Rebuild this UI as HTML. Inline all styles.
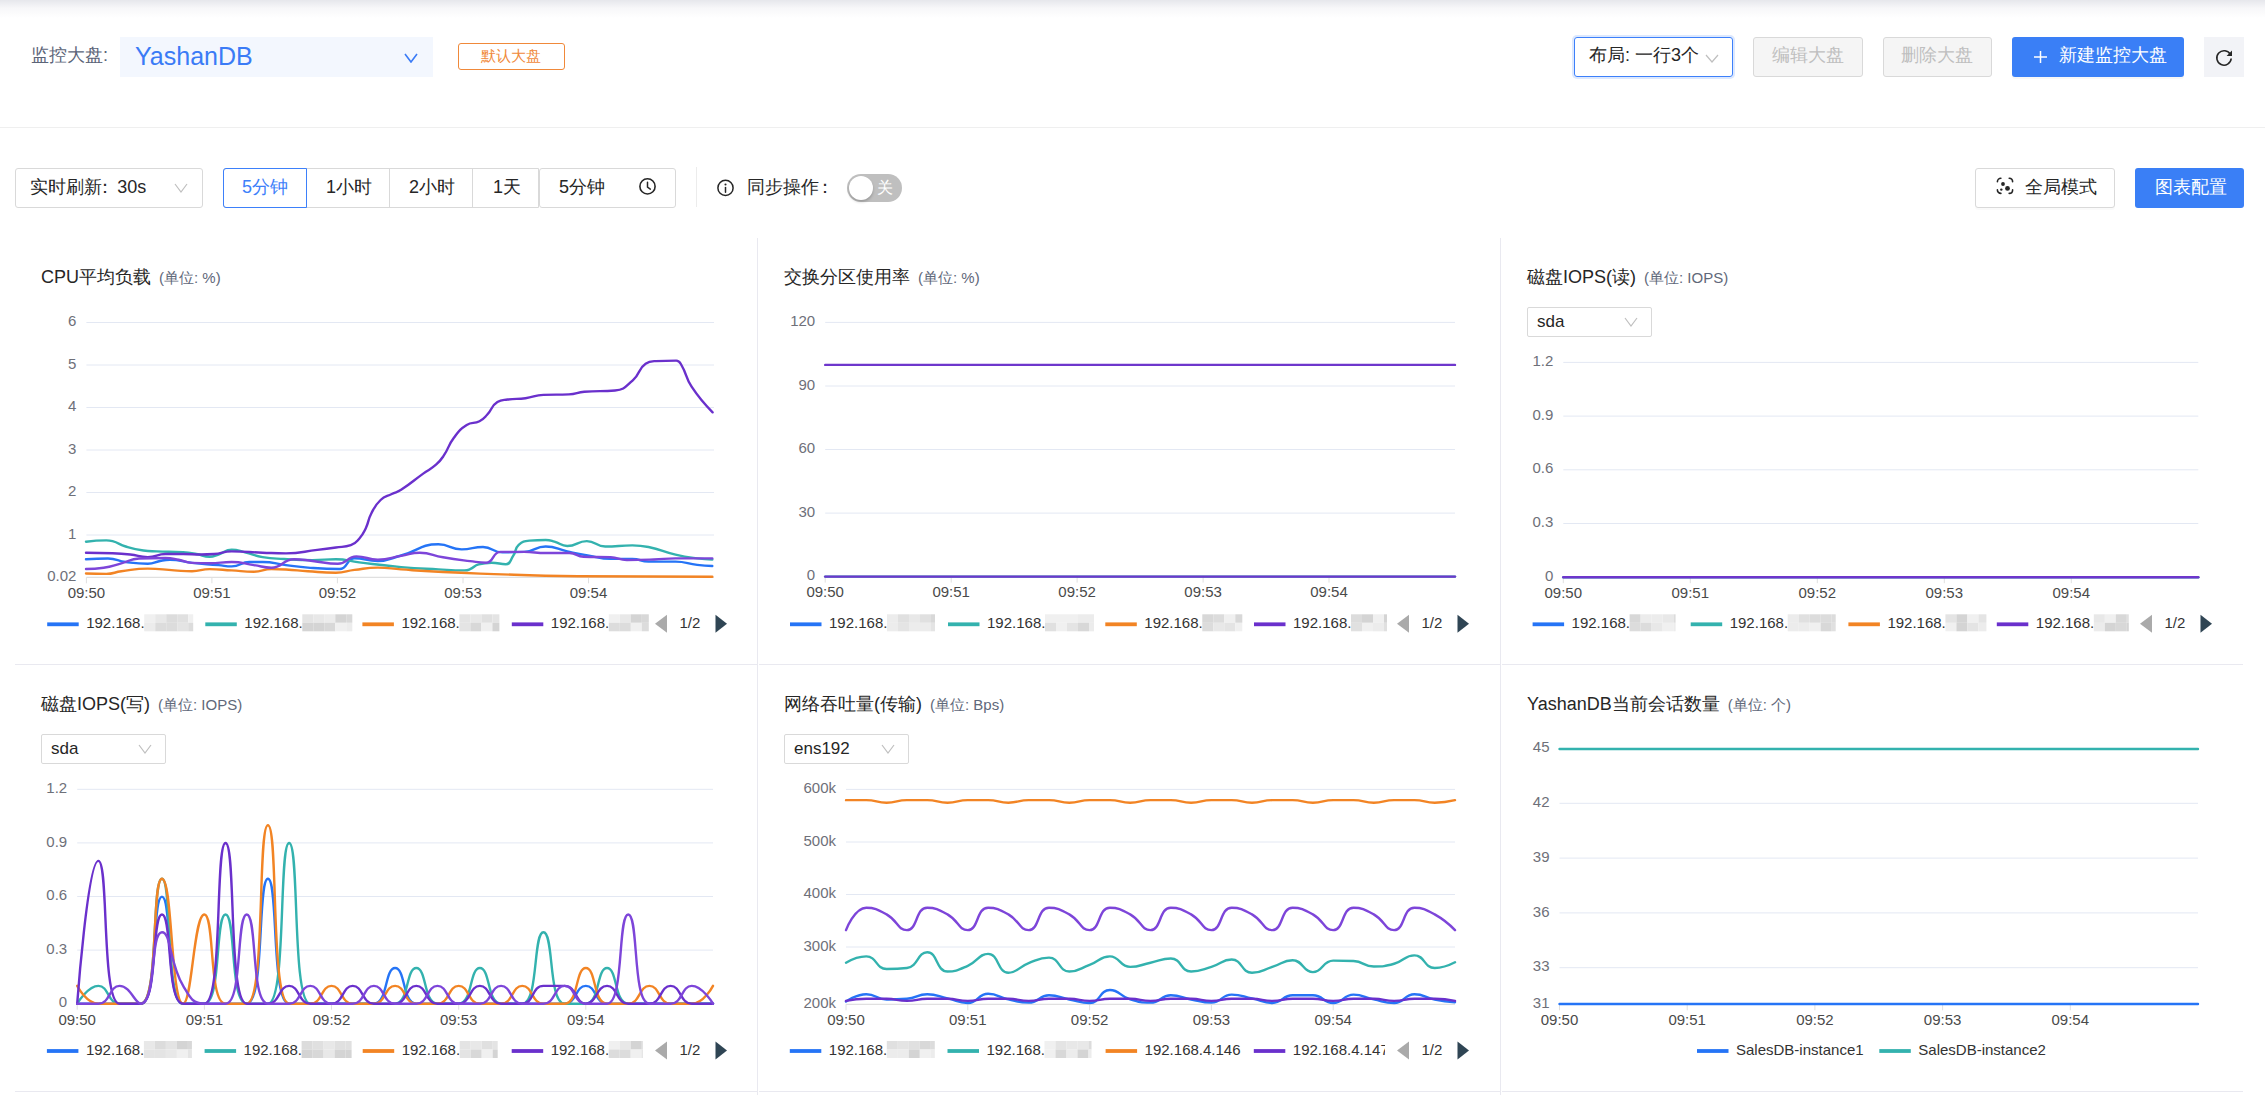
<!DOCTYPE html><html><head><meta charset="utf-8"><style>
*{margin:0;padding:0;box-sizing:border-box}
html,body{width:2265px;height:1095px;overflow:hidden;background:#fff;font-family:"Liberation Sans", sans-serif;color:#333}
.a{position:absolute}
.t{position:absolute;white-space:nowrap;line-height:1}
.btn{position:absolute;border:1px solid #d9d9d9;border-radius:3px;background:#fff}
</style></head><body>
<div class="a" style="left:0;top:0;width:2265px;height:18px;background:linear-gradient(#e6e7ec,#f7f7f9 45%,#fff)"></div>
<div class="t" style="left:31px;top:46px;font-size:18px;color:#5b6478">监控大盘:</div>
<div class="a" style="left:120px;top:37px;width:313px;height:40px;background:#f3f7fe"></div>
<div class="t" style="left:135px;top:44px;font-size:25px;color:#3a7bf6">YashanDB</div>
<svg class="a" style="left:404px;top:53px" width="14" height="10"><polyline points="1.0,1.0 7.0,9.0 13.0,1.0" fill="none" stroke="#3a7bf6" stroke-width="1.6"/></svg>
<div class="a" style="left:458px;top:43px;width:107px;height:27px;border:1px solid #f0893a;border-radius:3px"></div>
<div class="t" style="left:481px;top:48px;font-size:15px;color:#f0893a">默认大盘</div>
<div class="a" style="left:1574px;top:37px;width:159px;height:40px;border:1px solid #3d80fa;border-radius:3px;box-shadow:0 0 0 2px rgba(61,128,250,0.18)"></div>
<div class="t" style="left:1589px;top:46px;font-size:18px;color:#262626">布局: 一行3个</div>
<svg class="a" style="left:1705px;top:54px" width="14" height="9"><polyline points="1.0,1.0 7.0,8.0 13.0,1.0" fill="none" stroke="#bfbfbf" stroke-width="1.2"/></svg>
<div class="a" style="left:1753px;top:37px;width:110px;height:40px;border:1px solid #d9d9d9;border-radius:3px;background:#f5f5f5"></div>
<div class="t" style="left:1772px;top:46px;font-size:18px;color:#bfbfbf">编辑大盘</div>
<div class="a" style="left:1883px;top:37px;width:109px;height:40px;border:1px solid #d9d9d9;border-radius:3px;background:#f5f5f5"></div>
<div class="t" style="left:1901px;top:46px;font-size:18px;color:#bfbfbf">删除大盘</div>
<div class="a" style="left:2012px;top:37px;width:172px;height:40px;border-radius:3px;background:#3a7ff6;box-shadow:0 2px 0 rgba(0,0,0,0.03)"></div>
<svg class="a" style="left:2033px;top:50px" width="16" height="14"><path d="M7.5 1V13M1 7H14" stroke="#fff" stroke-width="1.5"/></svg>
<div class="t" style="left:2059px;top:46px;font-size:18px;color:#fff">新建监控大盘</div>
<div class="a" style="left:2204px;top:37px;width:40px;height:40px;background:#f2f3f7"></div>
<svg class="a" style="left:2213px;top:47px" width="22" height="22"><path d="M17.4 7.6 A7.2 7.2 0 1 0 18.2 11.5" fill="none" stroke="#262626" stroke-width="1.6"/><path d="M19 3.6 L19 9 L13.6 9 Z" fill="#262626"/></svg>
<div class="a" style="left:0;top:127px;width:2265px;height:1px;background:#efefef"></div>
<div class="btn" style="left:15px;top:168px;width:188px;height:40px"></div>
<div class="t" style="left:30px;top:178px;font-size:18px;color:#262626">实时刷新<span style="margin-left:-6.5px;margin-right:3.8px">：</span>30s</div>
<svg class="a" style="left:174px;top:183px" width="14" height="10"><polyline points="1.0,1.0 7.0,9.0 13.0,1.0" fill="none" stroke="#bfbfbf" stroke-width="1.2"/></svg>
<div class="a" style="left:223px;top:168px;width:316px;height:40px;border:1px solid #d9d9d9;border-radius:3px 0 0 3px"></div>
<div class="a" style="left:389px;top:168px;width:1px;height:40px;background:#d9d9d9"></div>
<div class="a" style="left:472px;top:168px;width:1px;height:40px;background:#d9d9d9"></div>
<div class="a" style="left:223px;top:168px;width:84px;height:40px;border:1px solid #3d80fa;border-radius:3px 0 0 3px"></div>
<div class="t" style="left:242px;top:178px;font-size:18px;color:#3d80fa">5分钟</div>
<div class="t" style="left:326px;top:178px;font-size:18px;color:#262626">1小时</div>
<div class="t" style="left:409px;top:178px;font-size:18px;color:#262626">2小时</div>
<div class="t" style="left:493px;top:178px;font-size:18px;color:#262626">1天</div>
<div class="a" style="left:539px;top:168px;width:137px;height:40px;border:1px solid #d9d9d9;border-radius:3px"></div>
<div class="t" style="left:559px;top:178px;font-size:18px;color:#262626">5分钟</div>
<svg class="a" style="left:630px;top:172px" width="35" height="30"><circle cx="17.5" cy="14.4" r="7.6" fill="none" stroke="#262626" stroke-width="1.6"/><path d="M17.5 10.3V15.2L20.3 17.1" fill="none" stroke="#262626" stroke-width="1.5" stroke-linecap="round" stroke-linejoin="round"/></svg>
<div class="a" style="left:696px;top:167px;width:1px;height:40px;background:#ececec"></div>
<svg class="a" style="left:710px;top:172px" width="35" height="30"><circle cx="15.5" cy="15.9" r="7.6" fill="none" stroke="#262626" stroke-width="1.5"/><path d="M15.5 15.4V20.2" stroke="#262626" stroke-width="1.5" stroke-linecap="round"/><circle cx="15.5" cy="12.5" r="1.05" fill="#262626"/></svg>
<div class="t" style="left:747px;top:178px;font-size:18px;color:#262626">同步操作<span style="margin-left:-3px">：</span></div>
<div class="a" style="left:847px;top:174px;width:55px;height:28px;border-radius:14px;background:#bfbfbf"></div>
<div class="a" style="left:849px;top:176px;width:24px;height:24px;border-radius:12px;background:#fff;box-shadow:0 2px 3px rgba(0,0,0,0.2)"></div>
<div class="t" style="left:877px;top:180px;font-size:16px;color:#fff">关</div>
<div class="btn" style="left:1975px;top:168px;width:140px;height:40px;box-shadow:0 2px 0 rgba(0,0,0,0.02)"></div>
<svg class="a" style="left:1990px;top:172px" width="30" height="28"><g fill="none" stroke="#262626" stroke-width="1.6" stroke-linecap="round"><path d="M7.4 9.8A3.5 3.5 0 0 1 10.9 6.3M19.2 6.3A3.5 3.5 0 0 1 22.6 9.8M22.6 17.9A3.5 3.5 0 0 1 19.2 21.4M10.9 21.4A3.5 3.5 0 0 1 7.4 17.9"/></g><circle cx="13" cy="12" r="1.9" fill="#262626"/><circle cx="17.5" cy="16.4" r="2.4" fill="#262626"/><circle cx="11.3" cy="17.6" r="1.2" fill="#262626"/></svg>
<div class="t" style="left:2025px;top:178px;font-size:18px;color:#262626">全局模式</div>
<div class="a" style="left:2135px;top:168px;width:109px;height:40px;border-radius:3px;background:#3a7ff6"></div>
<div class="t" style="left:2155px;top:178px;font-size:18px;color:#fff">图表配置</div>
<div class="a" style="left:757px;top:238px;width:1px;height:857px;background:#e9e9f0"></div>
<div class="a" style="left:1500px;top:238px;width:1px;height:857px;background:#e9e9f0"></div>
<div class="a" style="left:15px;top:664px;width:742px;height:1px;background:#e9e9f0"></div>
<div class="a" style="left:759px;top:664px;width:741px;height:1px;background:#e9e9f0"></div>
<div class="a" style="left:1502px;top:664px;width:741px;height:1px;background:#e9e9f0"></div>
<div class="a" style="left:15px;top:1091px;width:742px;height:1px;background:#e9e9f0"></div>
<div class="a" style="left:759px;top:1091px;width:741px;height:1px;background:#e9e9f0"></div>
<div class="a" style="left:1502px;top:1091px;width:741px;height:1px;background:#e9e9f0"></div>
<div class="t" style="left:41px;top:268px;font-size:18px;color:#262626">CPU平均负载<span style="font-size:15px;color:#5f687a;margin-left:8px">(单位: %)</span></div>
<svg class="a" style="left:0;top:0" width="2265" height="1095" font-family="Liberation Sans, sans-serif"><line x1="86.4" y1="322.5" x2="714" y2="322.5" stroke="#e3e8f3" stroke-width="1"/><text x="76.4" y="326.1" font-size="15" fill="#6e7079" text-anchor="end">6</text><line x1="86.4" y1="365.0" x2="714" y2="365.0" stroke="#e3e8f3" stroke-width="1"/><text x="76.4" y="368.6" font-size="15" fill="#6e7079" text-anchor="end">5</text><line x1="86.4" y1="407.5" x2="714" y2="407.5" stroke="#e3e8f3" stroke-width="1"/><text x="76.4" y="411.1" font-size="15" fill="#6e7079" text-anchor="end">4</text><line x1="86.4" y1="450.0" x2="714" y2="450.0" stroke="#e3e8f3" stroke-width="1"/><text x="76.4" y="453.6" font-size="15" fill="#6e7079" text-anchor="end">3</text><line x1="86.4" y1="492.5" x2="714" y2="492.5" stroke="#e3e8f3" stroke-width="1"/><text x="76.4" y="496.1" font-size="15" fill="#6e7079" text-anchor="end">2</text><line x1="86.4" y1="535.0" x2="714" y2="535.0" stroke="#e3e8f3" stroke-width="1"/><text x="76.4" y="538.6" font-size="15" fill="#6e7079" text-anchor="end">1</text><text x="76.4" y="580.9" font-size="15" fill="#6e7079" text-anchor="end">0.02</text><line x1="86.4" y1="577.3" x2="714" y2="577.3" stroke="#e0e0e0" stroke-width="1.3"/><line x1="86.4" y1="577.3" x2="86.4" y2="583.3" stroke="#e0e0e0" stroke-width="1"/><text x="86.4" y="598.1" font-size="15" fill="#4a4a4a" text-anchor="middle">09:50</text><line x1="211.9" y1="577.3" x2="211.9" y2="583.3" stroke="#e0e0e0" stroke-width="1"/><text x="211.9" y="598.1" font-size="15" fill="#4a4a4a" text-anchor="middle">09:51</text><line x1="337.4" y1="577.3" x2="337.4" y2="583.3" stroke="#e0e0e0" stroke-width="1"/><text x="337.4" y="598.1" font-size="15" fill="#4a4a4a" text-anchor="middle">09:52</text><line x1="463.0" y1="577.3" x2="463.0" y2="583.3" stroke="#e0e0e0" stroke-width="1"/><text x="463.0" y="598.1" font-size="15" fill="#4a4a4a" text-anchor="middle">09:53</text><line x1="588.5" y1="577.3" x2="588.5" y2="583.3" stroke="#e0e0e0" stroke-width="1"/><text x="588.5" y="598.1" font-size="15" fill="#4a4a4a" text-anchor="middle">09:54</text><path d="M86.00 559.30 C86.00 559.30 97.09 558.50 108.00 558.50 C116.94 558.50 116.77 560.81 125.70 562.00 C136.67 563.46 136.85 563.80 147.80 563.80 C154.50 563.80 154.34 561.91 161.00 560.70 C165.39 559.91 165.46 559.80 169.90 559.80 C180.96 559.80 180.91 561.69 192.00 562.90 C205.21 564.34 205.26 563.93 218.50 565.10 C225.11 565.68 225.19 566.40 231.70 566.40 C240.64 566.40 240.44 562.00 249.40 562.00 C255.89 562.00 256.04 562.00 262.60 562.00 C274.34 562.00 274.29 563.65 286.00 565.10 C296.94 566.45 296.91 566.80 307.90 567.60 C323.71 568.75 324.85 569.00 339.60 569.00 C348.15 569.00 346.11 558.20 354.50 558.20 C365.21 558.20 366.27 561.00 377.80 561.00 C389.57 561.00 389.56 558.68 401.10 555.50 C419.86 550.33 419.61 544.30 438.40 544.30 C449.91 544.30 449.95 549.40 461.70 549.40 C472.25 549.40 472.51 547.00 483.00 547.00 C492.86 547.00 492.51 552.40 502.40 552.40 C513.06 552.40 513.41 552.40 524.10 551.90 C535.06 551.39 534.87 546.50 545.70 546.50 C556.47 546.50 556.47 549.10 567.30 551.40 C578.12 553.70 578.10 553.81 589.00 555.70 C599.75 557.56 599.74 558.90 610.60 558.90 C621.39 558.90 621.51 558.90 632.30 558.90 C640.46 558.90 640.33 561.60 648.50 561.60 C661.93 561.60 662.07 561.60 675.50 561.60 C686.42 561.60 686.31 563.60 697.20 564.90 C704.71 565.80 712.30 566.00 712.30 566.00" fill="none" stroke="#2574f6" stroke-width="2.4" stroke-linejoin="round" stroke-linecap="round"/><path d="M86.00 541.70 C86.00 541.70 96.16 540.40 106.30 540.40 C109.41 540.40 109.54 540.40 112.50 541.20 C119.24 543.02 118.91 544.46 125.70 546.50 C134.36 549.11 134.46 549.27 143.40 550.50 C149.91 551.40 149.99 551.10 156.60 551.40 C169.84 552.00 169.88 551.44 183.10 552.30 C189.78 552.74 189.79 552.90 196.40 554.00 C203.04 555.10 203.02 556.70 209.60 556.70 C214.07 556.70 214.14 555.90 218.50 554.50 C225.19 552.35 224.95 549.60 231.70 549.60 C238.20 549.60 238.41 550.70 245.00 552.30 C253.86 554.45 253.65 555.56 262.60 557.10 C273.15 558.91 273.28 558.36 284.00 559.00 C298.28 559.86 298.30 560.10 312.60 560.10 C324.25 560.10 324.30 559.20 335.90 559.20 C347.60 559.20 347.53 560.99 359.20 562.40 C380.13 564.94 380.11 565.24 401.10 567.10 C419.71 568.74 419.74 568.43 438.40 569.40 C451.39 570.08 451.45 570.40 464.40 570.40 C467.25 570.40 467.39 570.31 470.00 569.20 C474.54 567.26 474.01 565.53 478.70 564.30 C484.81 562.70 485.15 562.70 491.60 562.70 C498.65 562.70 499.70 564.30 505.70 564.30 C510.55 564.30 510.13 560.43 513.30 555.70 C516.63 550.73 514.57 548.75 518.70 544.90 C522.67 541.20 523.86 541.03 529.50 540.60 C537.36 540.00 537.65 540.00 545.70 540.00 C550.10 540.00 550.15 540.42 554.40 541.60 C560.95 543.42 560.75 546.00 567.30 546.00 C576.95 546.00 577.10 541.10 586.80 541.10 C596.05 541.10 595.78 546.50 605.20 546.50 C618.53 546.50 618.77 545.40 632.30 545.40 C640.42 545.40 640.57 545.40 648.50 547.00 C662.17 549.76 661.86 551.41 675.50 554.60 C686.21 557.11 686.29 556.95 697.20 558.40 C704.69 559.40 712.30 559.50 712.30 559.50" fill="none" stroke="#33b2ae" stroke-width="2.4" stroke-linejoin="round" stroke-linecap="round"/><path d="M86.00 573.50 C86.00 573.50 96.21 573.90 106.30 573.90 C113.86 573.90 113.75 572.26 121.30 571.30 C134.50 569.61 134.53 568.60 147.80 568.60 C161.03 568.60 161.04 569.59 174.30 570.40 C183.14 570.94 183.18 571.30 192.00 571.30 C200.83 571.30 200.77 569.10 209.60 569.10 C220.62 569.10 220.65 569.75 231.70 570.40 C242.75 571.05 242.79 571.70 253.80 571.70 C262.64 571.70 262.56 569.10 271.40 569.10 C278.66 569.10 278.71 569.10 286.00 569.50 C296.96 570.10 296.94 570.60 307.90 571.30 C321.89 572.20 321.96 572.70 335.90 572.70 C345.26 572.70 345.17 571.04 354.50 569.90 C366.12 568.49 366.14 567.60 377.80 567.60 C389.44 567.60 389.44 568.59 401.10 569.40 C419.74 570.69 419.74 570.81 438.40 571.80 C459.19 572.91 459.19 572.95 480.00 573.60 C529.09 575.15 529.09 575.76 578.20 576.20 C645.24 576.80 712.30 576.80 712.30 576.80" fill="none" stroke="#f28424" stroke-width="2.4" stroke-linejoin="round" stroke-linecap="round"/><path d="M86.00 552.70 C86.00 552.70 99.26 552.70 112.50 553.20 C121.36 553.53 121.39 553.53 130.20 554.50 C139.04 555.48 139.02 557.10 147.80 557.10 C156.67 557.10 156.58 554.00 165.50 554.00 C174.23 554.00 174.30 554.00 183.10 554.00 C191.95 554.00 191.95 554.50 200.80 554.50 C207.40 554.50 207.44 554.50 214.00 554.00 C222.89 553.32 222.79 551.40 231.70 551.40 C247.09 551.40 247.15 552.13 262.60 552.70 C274.30 553.13 274.34 553.40 286.00 553.40 C301.69 553.40 301.66 551.75 317.30 549.90 C326.61 548.80 326.61 548.80 335.90 547.50 C343.36 546.45 343.97 547.50 350.80 545.20 C355.62 543.58 355.73 542.61 359.20 538.70 C363.18 534.21 363.08 533.86 365.70 528.40 C369.13 521.26 367.63 520.50 371.30 513.50 C375.08 506.30 374.83 505.49 380.60 500.00 C385.08 495.74 386.12 496.83 391.80 494.00 C396.37 491.73 396.84 492.57 401.10 489.80 C412.54 482.37 412.08 481.60 423.20 473.60 C429.53 469.05 430.18 469.79 436.00 464.70 C440.43 460.84 440.43 460.61 443.70 455.70 C449.38 447.16 447.78 445.97 453.90 437.80 C459.28 430.62 459.33 429.78 466.70 425.00 C472.13 421.48 473.65 424.12 479.50 421.20 C483.85 419.02 483.73 418.42 487.10 414.80 C492.68 408.82 491.15 405.91 497.40 402.00 C501.40 399.50 502.41 400.20 507.60 399.50 C516.46 398.30 516.61 399.34 525.50 398.20 C534.51 397.04 534.36 395.26 543.40 394.90 C556.06 394.40 556.22 394.90 568.90 394.40 C576.67 394.09 576.53 392.46 584.30 391.80 C599.58 390.51 600.46 391.80 615.00 390.50 C624.71 389.63 625.23 386.93 632.80 380.30 C640.53 373.53 637.94 368.88 645.60 363.70 C649.44 361.10 650.59 361.36 655.80 361.10 C665.94 360.60 666.66 360.60 676.30 360.60 C679.46 360.60 679.72 362.14 681.40 365.00 C687.37 375.19 685.05 376.77 691.60 386.70 C700.65 400.42 712.60 412.30 712.60 412.30" fill="none" stroke="#6a30cc" stroke-width="2.4" stroke-linejoin="round" stroke-linecap="round"/><path d="M86.00 569.00 C86.00 569.00 94.97 569.00 103.70 567.70 C112.62 566.37 112.52 565.59 121.30 563.30 C130.17 560.99 129.96 558.85 139.00 558.50 C152.06 558.00 152.29 558.00 165.50 558.00 C172.14 558.00 172.16 558.59 178.70 559.80 C185.41 561.04 185.25 562.59 192.00 562.90 C200.70 563.30 200.81 563.30 209.60 563.30 C220.66 563.30 220.69 562.00 231.70 562.00 C242.79 562.00 242.76 563.51 253.80 565.10 C262.61 566.36 262.87 567.70 271.40 567.70 C282.97 567.70 282.39 559.20 294.00 559.20 C302.99 559.20 303.31 560.02 312.60 561.00 C325.21 562.32 325.56 563.80 337.80 563.80 C347.46 563.80 346.79 556.40 356.40 556.40 C366.79 556.40 367.11 559.60 377.80 559.60 C389.46 559.60 389.46 557.82 401.10 555.90 C410.41 554.37 410.42 552.70 419.70 552.70 C431.37 552.70 431.29 555.34 443.00 557.30 C456.44 559.54 456.47 559.41 470.00 561.10 C478.07 562.11 478.95 562.70 486.20 562.70 C494.10 562.70 492.20 551.90 500.30 551.90 C511.15 551.90 512.21 551.90 524.10 551.90 C534.91 551.90 534.89 553.00 545.70 553.00 C557.59 553.00 557.76 553.00 569.50 553.00 C576.71 553.00 576.39 556.53 583.60 556.80 C596.94 557.30 597.17 556.80 610.60 557.30 C618.77 557.60 618.63 560.00 626.80 560.00 C640.28 560.00 640.36 559.94 653.90 559.50 C664.71 559.14 664.69 558.40 675.50 558.40 C693.89 558.40 712.30 558.40 712.30 558.40" fill="none" stroke="#7d45d9" stroke-width="2.4" stroke-linejoin="round" stroke-linecap="round"/><rect x="47.2" y="622.4" width="31.5" height="3.8" fill="#2574f6"/><text x="86.2" y="628.3" font-size="15" fill="#333">192.168.</text><rect x="144.2" y="614.3" width="11.0" height="8.5" fill="#f0f0f0"/><rect x="155.2" y="614.3" width="11.0" height="8.5" fill="#e8e8e8"/><rect x="166.2" y="614.3" width="11.0" height="8.5" fill="#dcdcdc"/><rect x="177.2" y="614.3" width="11.0" height="8.5" fill="#e0e0e0"/><rect x="188.2" y="614.3" width="5.0" height="8.5" fill="#f0f0f0"/><rect x="144.2" y="622.8" width="11.0" height="8.5" fill="#ececec"/><rect x="155.2" y="622.8" width="11.0" height="8.5" fill="#dcdcdc"/><rect x="166.2" y="622.8" width="11.0" height="8.5" fill="#dcdcdc"/><rect x="177.2" y="622.8" width="11.0" height="8.5" fill="#e4e4e4"/><rect x="188.2" y="622.8" width="5.0" height="8.5" fill="#dcdcdc"/><rect x="205.3" y="622.4" width="31.5" height="3.8" fill="#33b2ae"/><text x="244.3" y="628.3" font-size="15" fill="#333">192.168.</text><rect x="302.3" y="614.3" width="11.0" height="8.5" fill="#e4e4e4"/><rect x="313.3" y="614.3" width="11.0" height="8.5" fill="#e8e8e8"/><rect x="324.3" y="614.3" width="11.0" height="8.5" fill="#ececec"/><rect x="335.3" y="614.3" width="11.0" height="8.5" fill="#d4d4d4"/><rect x="346.3" y="614.3" width="6.0" height="8.5" fill="#d8d8d8"/><rect x="302.3" y="622.8" width="11.0" height="8.5" fill="#d4d4d4"/><rect x="313.3" y="622.8" width="11.0" height="8.5" fill="#d4d4d4"/><rect x="324.3" y="622.8" width="11.0" height="8.5" fill="#d8d8d8"/><rect x="335.3" y="622.8" width="11.0" height="8.5" fill="#f0f0f0"/><rect x="346.3" y="622.8" width="6.0" height="8.5" fill="#ececec"/><rect x="362.4" y="622.4" width="31.5" height="3.8" fill="#f28424"/><text x="401.4" y="628.3" font-size="15" fill="#333">192.168.</text><rect x="459.4" y="614.3" width="11.0" height="8.5" fill="#e4e4e4"/><rect x="470.4" y="614.3" width="11.0" height="8.5" fill="#e8e8e8"/><rect x="481.4" y="614.3" width="11.0" height="8.5" fill="#e0e0e0"/><rect x="492.4" y="614.3" width="7.0" height="8.5" fill="#e4e4e4"/><rect x="459.4" y="622.8" width="11.0" height="8.5" fill="#e4e4e4"/><rect x="470.4" y="622.8" width="11.0" height="8.5" fill="#d8d8d8"/><rect x="481.4" y="622.8" width="11.0" height="8.5" fill="#f0f0f0"/><rect x="492.4" y="622.8" width="7.0" height="8.5" fill="#d4d4d4"/><rect x="511.8" y="622.4" width="31.5" height="3.8" fill="#6a30cc"/><text x="550.8" y="628.3" font-size="15" fill="#333">192.168.</text><rect x="608.8" y="614.3" width="11.0" height="8.5" fill="#f0f0f0"/><rect x="619.8" y="614.3" width="11.0" height="8.5" fill="#e8e8e8"/><rect x="630.8" y="614.3" width="11.0" height="8.5" fill="#d4d4d4"/><rect x="641.8" y="614.3" width="7.0" height="8.5" fill="#d8d8d8"/><rect x="608.8" y="622.8" width="11.0" height="8.5" fill="#dcdcdc"/><rect x="619.8" y="622.8" width="11.0" height="8.5" fill="#dcdcdc"/><rect x="630.8" y="622.8" width="11.0" height="8.5" fill="#f0f0f0"/><rect x="641.8" y="622.8" width="7.0" height="8.5" fill="#dcdcdc"/><path d="M655.0 623.8 L667.0 614.8 L667.0 632.8 Z" fill="#aaaaaa"/><text x="679.5" y="627.8" font-size="15" fill="#333">1/2</text><path d="M715.5 614.8 L727.0 623.8 L715.5 632.8 Z" fill="#2f4554"/></svg>
<div class="t" style="left:784px;top:268px;font-size:18px;color:#262626">交换分区使用率<span style="font-size:15px;color:#5f687a;margin-left:8px">(单位: %)</span></div>
<svg class="a" style="left:0;top:0" width="2265" height="1095" font-family="Liberation Sans, sans-serif"><line x1="825.2" y1="322.4" x2="1455" y2="322.4" stroke="#e3e8f3" stroke-width="1"/><text x="815.2" y="326.0" font-size="15" fill="#6e7079" text-anchor="end">120</text><line x1="825.2" y1="386.0" x2="1455" y2="386.0" stroke="#e3e8f3" stroke-width="1"/><text x="815.2" y="389.6" font-size="15" fill="#6e7079" text-anchor="end">90</text><line x1="825.2" y1="449.5" x2="1455" y2="449.5" stroke="#e3e8f3" stroke-width="1"/><text x="815.2" y="453.1" font-size="15" fill="#6e7079" text-anchor="end">60</text><line x1="825.2" y1="513.1" x2="1455" y2="513.1" stroke="#e3e8f3" stroke-width="1"/><text x="815.2" y="516.7" font-size="15" fill="#6e7079" text-anchor="end">30</text><text x="815.2" y="580.2" font-size="15" fill="#6e7079" text-anchor="end">0</text><line x1="825.2" y1="576.6" x2="1455" y2="576.6" stroke="#e0e0e0" stroke-width="1.3"/><line x1="825.2" y1="576.6" x2="825.2" y2="582.6" stroke="#e0e0e0" stroke-width="1"/><text x="825.2" y="597.4" font-size="15" fill="#4a4a4a" text-anchor="middle">09:50</text><line x1="951.2" y1="576.6" x2="951.2" y2="582.6" stroke="#e0e0e0" stroke-width="1"/><text x="951.2" y="597.4" font-size="15" fill="#4a4a4a" text-anchor="middle">09:51</text><line x1="1077.1" y1="576.6" x2="1077.1" y2="582.6" stroke="#e0e0e0" stroke-width="1"/><text x="1077.1" y="597.4" font-size="15" fill="#4a4a4a" text-anchor="middle">09:52</text><line x1="1203.1" y1="576.6" x2="1203.1" y2="582.6" stroke="#e0e0e0" stroke-width="1"/><text x="1203.1" y="597.4" font-size="15" fill="#4a4a4a" text-anchor="middle">09:53</text><line x1="1329.0" y1="576.6" x2="1329.0" y2="582.6" stroke="#e0e0e0" stroke-width="1"/><text x="1329.0" y="597.4" font-size="15" fill="#4a4a4a" text-anchor="middle">09:54</text><path d="M825.20 576.60 C825.20 576.60 835.70 576.60 846.19 576.60 C856.69 576.60 856.69 576.60 867.19 576.60 C877.68 576.60 877.68 576.60 888.18 576.60 C898.68 576.60 898.68 576.60 909.17 576.60 C919.67 576.60 919.67 576.60 930.17 576.60 C940.66 576.60 940.66 576.60 951.16 576.60 C961.66 576.60 961.66 576.60 972.15 576.60 C982.65 576.60 982.65 576.60 993.15 576.60 C1003.64 576.60 1003.64 576.60 1014.14 576.60 C1024.64 576.60 1024.64 576.60 1035.13 576.60 C1045.63 576.60 1045.63 576.60 1056.13 576.60 C1066.62 576.60 1066.62 576.60 1077.12 576.60 C1087.62 576.60 1087.62 576.60 1098.11 576.60 C1108.61 576.60 1108.61 576.60 1119.11 576.60 C1129.60 576.60 1129.60 576.60 1140.10 576.60 C1150.60 576.60 1150.60 576.60 1161.09 576.60 C1171.59 576.60 1171.59 576.60 1182.09 576.60 C1192.58 576.60 1192.58 576.60 1203.08 576.60 C1213.58 576.60 1213.58 576.60 1224.07 576.60 C1234.57 576.60 1234.57 576.60 1245.07 576.60 C1255.56 576.60 1255.56 576.60 1266.06 576.60 C1276.56 576.60 1276.56 576.60 1287.05 576.60 C1297.55 576.60 1297.55 576.60 1308.05 576.60 C1318.54 576.60 1318.54 576.60 1329.04 576.60 C1339.54 576.60 1339.54 576.60 1350.03 576.60 C1360.53 576.60 1360.53 576.60 1371.03 576.60 C1381.52 576.60 1381.52 576.60 1392.02 576.60 C1402.52 576.60 1402.52 576.60 1413.01 576.60 C1423.51 576.60 1423.51 576.60 1434.01 576.60 C1444.50 576.60 1455.00 576.60 1455.00 576.60" fill="none" stroke="#33b2ae" stroke-width="2.4" stroke-linejoin="round" stroke-linecap="round"/><path d="M825.20 576.60 C825.20 576.60 835.70 576.60 846.19 576.60 C856.69 576.60 856.69 576.60 867.19 576.60 C877.68 576.60 877.68 576.60 888.18 576.60 C898.68 576.60 898.68 576.60 909.17 576.60 C919.67 576.60 919.67 576.60 930.17 576.60 C940.66 576.60 940.66 576.60 951.16 576.60 C961.66 576.60 961.66 576.60 972.15 576.60 C982.65 576.60 982.65 576.60 993.15 576.60 C1003.64 576.60 1003.64 576.60 1014.14 576.60 C1024.64 576.60 1024.64 576.60 1035.13 576.60 C1045.63 576.60 1045.63 576.60 1056.13 576.60 C1066.62 576.60 1066.62 576.60 1077.12 576.60 C1087.62 576.60 1087.62 576.60 1098.11 576.60 C1108.61 576.60 1108.61 576.60 1119.11 576.60 C1129.60 576.60 1129.60 576.60 1140.10 576.60 C1150.60 576.60 1150.60 576.60 1161.09 576.60 C1171.59 576.60 1171.59 576.60 1182.09 576.60 C1192.58 576.60 1192.58 576.60 1203.08 576.60 C1213.58 576.60 1213.58 576.60 1224.07 576.60 C1234.57 576.60 1234.57 576.60 1245.07 576.60 C1255.56 576.60 1255.56 576.60 1266.06 576.60 C1276.56 576.60 1276.56 576.60 1287.05 576.60 C1297.55 576.60 1297.55 576.60 1308.05 576.60 C1318.54 576.60 1318.54 576.60 1329.04 576.60 C1339.54 576.60 1339.54 576.60 1350.03 576.60 C1360.53 576.60 1360.53 576.60 1371.03 576.60 C1381.52 576.60 1381.52 576.60 1392.02 576.60 C1402.52 576.60 1402.52 576.60 1413.01 576.60 C1423.51 576.60 1423.51 576.60 1434.01 576.60 C1444.50 576.60 1455.00 576.60 1455.00 576.60" fill="none" stroke="#6e36cc" stroke-width="2.4" stroke-linejoin="round" stroke-linecap="round"/><path d="M825.20 364.90 C825.20 364.90 835.70 364.90 846.19 364.90 C856.69 364.90 856.69 364.90 867.19 364.90 C877.68 364.90 877.68 364.90 888.18 364.90 C898.68 364.90 898.68 364.90 909.17 364.90 C919.67 364.90 919.67 364.90 930.17 364.90 C940.66 364.90 940.66 364.90 951.16 364.90 C961.66 364.90 961.66 364.90 972.15 364.90 C982.65 364.90 982.65 364.90 993.15 364.90 C1003.64 364.90 1003.64 364.90 1014.14 364.90 C1024.64 364.90 1024.64 364.90 1035.13 364.90 C1045.63 364.90 1045.63 364.90 1056.13 364.90 C1066.62 364.90 1066.62 364.90 1077.12 364.90 C1087.62 364.90 1087.62 364.90 1098.11 364.90 C1108.61 364.90 1108.61 364.90 1119.11 364.90 C1129.60 364.90 1129.60 364.90 1140.10 364.90 C1150.60 364.90 1150.60 364.90 1161.09 364.90 C1171.59 364.90 1171.59 364.90 1182.09 364.90 C1192.58 364.90 1192.58 364.90 1203.08 364.90 C1213.58 364.90 1213.58 364.90 1224.07 364.90 C1234.57 364.90 1234.57 364.90 1245.07 364.90 C1255.56 364.90 1255.56 364.90 1266.06 364.90 C1276.56 364.90 1276.56 364.90 1287.05 364.90 C1297.55 364.90 1297.55 364.90 1308.05 364.90 C1318.54 364.90 1318.54 364.90 1329.04 364.90 C1339.54 364.90 1339.54 364.90 1350.03 364.90 C1360.53 364.90 1360.53 364.90 1371.03 364.90 C1381.52 364.90 1381.52 364.90 1392.02 364.90 C1402.52 364.90 1402.52 364.90 1413.01 364.90 C1423.51 364.90 1423.51 364.90 1434.01 364.90 C1444.50 364.90 1455.00 364.90 1455.00 364.90" fill="none" stroke="#6e36cc" stroke-width="2.4" stroke-linejoin="round" stroke-linecap="round"/><rect x="790.0" y="622.4" width="31.5" height="3.8" fill="#2574f6"/><text x="829.0" y="628.3" font-size="15" fill="#333">192.168.</text><rect x="887.0" y="614.3" width="11.0" height="8.5" fill="#ececec"/><rect x="898.0" y="614.3" width="11.0" height="8.5" fill="#e0e0e0"/><rect x="909.0" y="614.3" width="11.0" height="8.5" fill="#e8e8e8"/><rect x="920.0" y="614.3" width="11.0" height="8.5" fill="#e0e0e0"/><rect x="931.0" y="614.3" width="4.0" height="8.5" fill="#d8d8d8"/><rect x="887.0" y="622.8" width="11.0" height="8.5" fill="#ececec"/><rect x="898.0" y="622.8" width="11.0" height="8.5" fill="#e4e4e4"/><rect x="909.0" y="622.8" width="11.0" height="8.5" fill="#ececec"/><rect x="920.0" y="622.8" width="11.0" height="8.5" fill="#ececec"/><rect x="931.0" y="622.8" width="4.0" height="8.5" fill="#e4e4e4"/><rect x="948.0" y="622.4" width="31.5" height="3.8" fill="#33b2ae"/><text x="987.0" y="628.3" font-size="15" fill="#333">192.168.</text><rect x="1045.0" y="614.3" width="11.0" height="8.5" fill="#f0f0f0"/><rect x="1056.0" y="614.3" width="11.0" height="8.5" fill="#f0f0f0"/><rect x="1067.0" y="614.3" width="11.0" height="8.5" fill="#f0f0f0"/><rect x="1078.0" y="614.3" width="11.0" height="8.5" fill="#ececec"/><rect x="1089.0" y="614.3" width="5.0" height="8.5" fill="#ececec"/><rect x="1045.0" y="622.8" width="11.0" height="8.5" fill="#e0e0e0"/><rect x="1056.0" y="622.8" width="11.0" height="8.5" fill="#f0f0f0"/><rect x="1067.0" y="622.8" width="11.0" height="8.5" fill="#e4e4e4"/><rect x="1078.0" y="622.8" width="11.0" height="8.5" fill="#d8d8d8"/><rect x="1089.0" y="622.8" width="5.0" height="8.5" fill="#ececec"/><rect x="1105.3" y="622.4" width="31.5" height="3.8" fill="#f28424"/><text x="1144.3" y="628.3" font-size="15" fill="#333">192.168.</text><rect x="1202.3" y="614.3" width="11.0" height="8.5" fill="#d8d8d8"/><rect x="1213.3" y="614.3" width="11.0" height="8.5" fill="#dcdcdc"/><rect x="1224.3" y="614.3" width="11.0" height="8.5" fill="#f0f0f0"/><rect x="1235.3" y="614.3" width="7.0" height="8.5" fill="#d8d8d8"/><rect x="1202.3" y="622.8" width="11.0" height="8.5" fill="#dcdcdc"/><rect x="1213.3" y="622.8" width="11.0" height="8.5" fill="#e8e8e8"/><rect x="1224.3" y="622.8" width="11.0" height="8.5" fill="#e4e4e4"/><rect x="1235.3" y="622.8" width="7.0" height="8.5" fill="#f0f0f0"/><rect x="1254.0" y="622.4" width="31.5" height="3.8" fill="#6a30cc"/><text x="1293.0" y="628.3" font-size="15" fill="#333">192.168.</text><rect x="1351.0" y="614.3" width="11.0" height="8.5" fill="#dcdcdc"/><rect x="1362.0" y="614.3" width="11.0" height="8.5" fill="#d4d4d4"/><rect x="1373.0" y="614.3" width="11.0" height="8.5" fill="#f0f0f0"/><rect x="1384.0" y="614.3" width="3.0" height="8.5" fill="#d4d4d4"/><rect x="1351.0" y="622.8" width="11.0" height="8.5" fill="#e0e0e0"/><rect x="1362.0" y="622.8" width="11.0" height="8.5" fill="#f0f0f0"/><rect x="1373.0" y="622.8" width="11.0" height="8.5" fill="#ececec"/><rect x="1384.0" y="622.8" width="3.0" height="8.5" fill="#e0e0e0"/><path d="M1397.0 623.8 L1409.0 614.8 L1409.0 632.8 Z" fill="#aaaaaa"/><text x="1421.5" y="627.8" font-size="15" fill="#333">1/2</text><path d="M1457.5 614.8 L1469.0 623.8 L1457.5 632.8 Z" fill="#2f4554"/></svg>
<div class="t" style="left:1527px;top:268px;font-size:18px;color:#262626">磁盘IOPS(读)<span style="font-size:15px;color:#5f687a;margin-left:8px">(单位: IOPS)</span></div>
<div class="btn" style="left:1527px;top:307px;width:125px;height:30px;border-radius:2px"></div>
<div class="t" style="left:1537px;top:313px;font-size:17px;color:#262626">sda</div>
<svg class="a" style="left:1624px;top:317px" width="14" height="10"><polyline points="1.0,1.0 7.0,9.0 13.0,1.0" fill="none" stroke="#bfbfbf" stroke-width="1.2"/></svg>
<svg class="a" style="left:0;top:0" width="2265" height="1095" font-family="Liberation Sans, sans-serif"><line x1="1563.3" y1="362.4" x2="2198.3" y2="362.4" stroke="#e3e8f3" stroke-width="1"/><text x="1553.3" y="366.0" font-size="15" fill="#6e7079" text-anchor="end">1.2</text><line x1="1563.3" y1="416.1" x2="2198.3" y2="416.1" stroke="#e3e8f3" stroke-width="1"/><text x="1553.3" y="419.7" font-size="15" fill="#6e7079" text-anchor="end">0.9</text><line x1="1563.3" y1="469.8" x2="2198.3" y2="469.8" stroke="#e3e8f3" stroke-width="1"/><text x="1553.3" y="473.4" font-size="15" fill="#6e7079" text-anchor="end">0.6</text><line x1="1563.3" y1="523.5" x2="2198.3" y2="523.5" stroke="#e3e8f3" stroke-width="1"/><text x="1553.3" y="527.1" font-size="15" fill="#6e7079" text-anchor="end">0.3</text><text x="1553.3" y="580.8" font-size="15" fill="#6e7079" text-anchor="end">0</text><line x1="1563.3" y1="577.2" x2="2198.3" y2="577.2" stroke="#e0e0e0" stroke-width="1.3"/><line x1="1563.3" y1="577.2" x2="1563.3" y2="583.2" stroke="#e0e0e0" stroke-width="1"/><text x="1563.3" y="598.0" font-size="15" fill="#4a4a4a" text-anchor="middle">09:50</text><line x1="1690.3" y1="577.2" x2="1690.3" y2="583.2" stroke="#e0e0e0" stroke-width="1"/><text x="1690.3" y="598.0" font-size="15" fill="#4a4a4a" text-anchor="middle">09:51</text><line x1="1817.3" y1="577.2" x2="1817.3" y2="583.2" stroke="#e0e0e0" stroke-width="1"/><text x="1817.3" y="598.0" font-size="15" fill="#4a4a4a" text-anchor="middle">09:52</text><line x1="1944.3" y1="577.2" x2="1944.3" y2="583.2" stroke="#e0e0e0" stroke-width="1"/><text x="1944.3" y="598.0" font-size="15" fill="#4a4a4a" text-anchor="middle">09:53</text><line x1="2071.3" y1="577.2" x2="2071.3" y2="583.2" stroke="#e0e0e0" stroke-width="1"/><text x="2071.3" y="598.0" font-size="15" fill="#4a4a4a" text-anchor="middle">09:54</text><path d="M1563.30 577.20 C1563.30 577.20 1573.88 577.20 1584.47 577.20 C1595.05 577.20 1595.05 577.20 1605.63 577.20 C1616.22 577.20 1616.22 577.20 1626.80 577.20 C1637.38 577.20 1637.38 577.20 1647.97 577.20 C1658.55 577.20 1658.55 577.20 1669.13 577.20 C1679.72 577.20 1679.72 577.20 1690.30 577.20 C1700.88 577.20 1700.88 577.20 1711.47 577.20 C1722.05 577.20 1722.05 577.20 1732.63 577.20 C1743.22 577.20 1743.22 577.20 1753.80 577.20 C1764.38 577.20 1764.38 577.20 1774.97 577.20 C1785.55 577.20 1785.55 577.20 1796.13 577.20 C1806.72 577.20 1806.72 577.20 1817.30 577.20 C1827.88 577.20 1827.88 577.20 1838.47 577.20 C1849.05 577.20 1849.05 577.20 1859.63 577.20 C1870.22 577.20 1870.22 577.20 1880.80 577.20 C1891.38 577.20 1891.38 577.20 1901.97 577.20 C1912.55 577.20 1912.55 577.20 1923.13 577.20 C1933.72 577.20 1933.72 577.20 1944.30 577.20 C1954.88 577.20 1954.88 577.20 1965.47 577.20 C1976.05 577.20 1976.05 577.20 1986.63 577.20 C1997.22 577.20 1997.22 577.20 2007.80 577.20 C2018.38 577.20 2018.38 577.20 2028.97 577.20 C2039.55 577.20 2039.55 577.20 2050.13 577.20 C2060.72 577.20 2060.72 577.20 2071.30 577.20 C2081.88 577.20 2081.88 577.20 2092.47 577.20 C2103.05 577.20 2103.05 577.20 2113.63 577.20 C2124.22 577.20 2124.22 577.20 2134.80 577.20 C2145.38 577.20 2145.38 577.20 2155.97 577.20 C2166.55 577.20 2166.55 577.20 2177.13 577.20 C2187.72 577.20 2198.30 577.20 2198.30 577.20" fill="none" stroke="#33b2ae" stroke-width="2.4" stroke-linejoin="round" stroke-linecap="round"/><path d="M1563.30 577.20 C1563.30 577.20 1573.88 577.20 1584.47 577.20 C1595.05 577.20 1595.05 577.20 1605.63 577.20 C1616.22 577.20 1616.22 577.20 1626.80 577.20 C1637.38 577.20 1637.38 577.20 1647.97 577.20 C1658.55 577.20 1658.55 577.20 1669.13 577.20 C1679.72 577.20 1679.72 577.20 1690.30 577.20 C1700.88 577.20 1700.88 577.20 1711.47 577.20 C1722.05 577.20 1722.05 577.20 1732.63 577.20 C1743.22 577.20 1743.22 577.20 1753.80 577.20 C1764.38 577.20 1764.38 577.20 1774.97 577.20 C1785.55 577.20 1785.55 577.20 1796.13 577.20 C1806.72 577.20 1806.72 577.20 1817.30 577.20 C1827.88 577.20 1827.88 577.20 1838.47 577.20 C1849.05 577.20 1849.05 577.20 1859.63 577.20 C1870.22 577.20 1870.22 577.20 1880.80 577.20 C1891.38 577.20 1891.38 577.20 1901.97 577.20 C1912.55 577.20 1912.55 577.20 1923.13 577.20 C1933.72 577.20 1933.72 577.20 1944.30 577.20 C1954.88 577.20 1954.88 577.20 1965.47 577.20 C1976.05 577.20 1976.05 577.20 1986.63 577.20 C1997.22 577.20 1997.22 577.20 2007.80 577.20 C2018.38 577.20 2018.38 577.20 2028.97 577.20 C2039.55 577.20 2039.55 577.20 2050.13 577.20 C2060.72 577.20 2060.72 577.20 2071.30 577.20 C2081.88 577.20 2081.88 577.20 2092.47 577.20 C2103.05 577.20 2103.05 577.20 2113.63 577.20 C2124.22 577.20 2124.22 577.20 2134.80 577.20 C2145.38 577.20 2145.38 577.20 2155.97 577.20 C2166.55 577.20 2166.55 577.20 2177.13 577.20 C2187.72 577.20 2198.30 577.20 2198.30 577.20" fill="none" stroke="#6e36cc" stroke-width="2.4" stroke-linejoin="round" stroke-linecap="round"/><rect x="1532.6" y="622.4" width="31.5" height="3.8" fill="#2574f6"/><text x="1571.6" y="628.3" font-size="15" fill="#333">192.168.</text><rect x="1629.6" y="614.3" width="11.0" height="8.5" fill="#d8d8d8"/><rect x="1640.6" y="614.3" width="11.0" height="8.5" fill="#ececec"/><rect x="1651.6" y="614.3" width="11.0" height="8.5" fill="#ececec"/><rect x="1662.6" y="614.3" width="11.0" height="8.5" fill="#e8e8e8"/><rect x="1673.6" y="614.3" width="2.0" height="8.5" fill="#dcdcdc"/><rect x="1629.6" y="622.8" width="11.0" height="8.5" fill="#dcdcdc"/><rect x="1640.6" y="622.8" width="11.0" height="8.5" fill="#dcdcdc"/><rect x="1651.6" y="622.8" width="11.0" height="8.5" fill="#e8e8e8"/><rect x="1662.6" y="622.8" width="11.0" height="8.5" fill="#f0f0f0"/><rect x="1673.6" y="622.8" width="2.0" height="8.5" fill="#ececec"/><rect x="1690.7" y="622.4" width="31.5" height="3.8" fill="#33b2ae"/><text x="1729.7" y="628.3" font-size="15" fill="#333">192.168.</text><rect x="1787.7" y="614.3" width="11.0" height="8.5" fill="#ececec"/><rect x="1798.7" y="614.3" width="11.0" height="8.5" fill="#e0e0e0"/><rect x="1809.7" y="614.3" width="11.0" height="8.5" fill="#dcdcdc"/><rect x="1820.7" y="614.3" width="11.0" height="8.5" fill="#dcdcdc"/><rect x="1831.7" y="614.3" width="4.0" height="8.5" fill="#dcdcdc"/><rect x="1787.7" y="622.8" width="11.0" height="8.5" fill="#ececec"/><rect x="1798.7" y="622.8" width="11.0" height="8.5" fill="#ececec"/><rect x="1809.7" y="622.8" width="11.0" height="8.5" fill="#f0f0f0"/><rect x="1820.7" y="622.8" width="11.0" height="8.5" fill="#d8d8d8"/><rect x="1831.7" y="622.8" width="4.0" height="8.5" fill="#e0e0e0"/><rect x="1848.4" y="622.4" width="31.5" height="3.8" fill="#f28424"/><text x="1887.4" y="628.3" font-size="15" fill="#333">192.168.</text><rect x="1945.4" y="614.3" width="11.0" height="8.5" fill="#e4e4e4"/><rect x="1956.4" y="614.3" width="11.0" height="8.5" fill="#d4d4d4"/><rect x="1967.4" y="614.3" width="11.0" height="8.5" fill="#f0f0f0"/><rect x="1978.4" y="614.3" width="8.0" height="8.5" fill="#e4e4e4"/><rect x="1945.4" y="622.8" width="11.0" height="8.5" fill="#f0f0f0"/><rect x="1956.4" y="622.8" width="11.0" height="8.5" fill="#d4d4d4"/><rect x="1967.4" y="622.8" width="11.0" height="8.5" fill="#e4e4e4"/><rect x="1978.4" y="622.8" width="8.0" height="8.5" fill="#ececec"/><rect x="1996.8" y="622.4" width="31.5" height="3.8" fill="#6a30cc"/><text x="2035.8" y="628.3" font-size="15" fill="#333">192.168.</text><rect x="2093.8" y="614.3" width="11.0" height="8.5" fill="#e8e8e8"/><rect x="2104.8" y="614.3" width="11.0" height="8.5" fill="#f0f0f0"/><rect x="2115.8" y="614.3" width="11.0" height="8.5" fill="#d8d8d8"/><rect x="2126.8" y="614.3" width="2.0" height="8.5" fill="#e0e0e0"/><rect x="2093.8" y="622.8" width="11.0" height="8.5" fill="#ececec"/><rect x="2104.8" y="622.8" width="11.0" height="8.5" fill="#d4d4d4"/><rect x="2115.8" y="622.8" width="11.0" height="8.5" fill="#d8d8d8"/><rect x="2126.8" y="622.8" width="2.0" height="8.5" fill="#d4d4d4"/><path d="M2140.0 623.8 L2152.0 614.8 L2152.0 632.8 Z" fill="#aaaaaa"/><text x="2164.5" y="627.8" font-size="15" fill="#333">1/2</text><path d="M2200.5 614.8 L2212.0 623.8 L2200.5 632.8 Z" fill="#2f4554"/></svg>
<div class="t" style="left:41px;top:695px;font-size:18px;color:#262626">磁盘IOPS(写)<span style="font-size:15px;color:#5f687a;margin-left:8px">(单位: IOPS)</span></div>
<div class="btn" style="left:41px;top:734px;width:125px;height:30px;border-radius:2px"></div>
<div class="t" style="left:51px;top:740px;font-size:17px;color:#262626">sda</div>
<svg class="a" style="left:138px;top:744px" width="14" height="10"><polyline points="1.0,1.0 7.0,9.0 13.0,1.0" fill="none" stroke="#bfbfbf" stroke-width="1.2"/></svg>
<svg class="a" style="left:0;top:0" width="2265" height="1095" font-family="Liberation Sans, sans-serif"><line x1="77.2" y1="789.3" x2="713" y2="789.3" stroke="#e3e8f3" stroke-width="1"/><text x="67.2" y="792.9" font-size="15" fill="#6e7079" text-anchor="end">1.2</text><line x1="77.2" y1="842.9" x2="713" y2="842.9" stroke="#e3e8f3" stroke-width="1"/><text x="67.2" y="846.5" font-size="15" fill="#6e7079" text-anchor="end">0.9</text><line x1="77.2" y1="896.5" x2="713" y2="896.5" stroke="#e3e8f3" stroke-width="1"/><text x="67.2" y="900.1" font-size="15" fill="#6e7079" text-anchor="end">0.6</text><line x1="77.2" y1="950.1" x2="713" y2="950.1" stroke="#e3e8f3" stroke-width="1"/><text x="67.2" y="953.7" font-size="15" fill="#6e7079" text-anchor="end">0.3</text><text x="67.2" y="1007.3" font-size="15" fill="#6e7079" text-anchor="end">0</text><line x1="77.2" y1="1003.7" x2="713" y2="1003.7" stroke="#e0e0e0" stroke-width="1.3"/><line x1="77.2" y1="1003.7" x2="77.2" y2="1009.7" stroke="#e0e0e0" stroke-width="1"/><text x="77.2" y="1024.5" font-size="15" fill="#4a4a4a" text-anchor="middle">09:50</text><line x1="204.4" y1="1003.7" x2="204.4" y2="1009.7" stroke="#e0e0e0" stroke-width="1"/><text x="204.4" y="1024.5" font-size="15" fill="#4a4a4a" text-anchor="middle">09:51</text><line x1="331.5" y1="1003.7" x2="331.5" y2="1009.7" stroke="#e0e0e0" stroke-width="1"/><text x="331.5" y="1024.5" font-size="15" fill="#4a4a4a" text-anchor="middle">09:52</text><line x1="458.7" y1="1003.7" x2="458.7" y2="1009.7" stroke="#e0e0e0" stroke-width="1"/><text x="458.7" y="1024.5" font-size="15" fill="#4a4a4a" text-anchor="middle">09:53</text><line x1="585.8" y1="1003.7" x2="585.8" y2="1009.7" stroke="#e0e0e0" stroke-width="1"/><text x="585.8" y="1024.5" font-size="15" fill="#4a4a4a" text-anchor="middle">09:54</text><path d="M77.20 1003.70 C77.20 1003.70 87.80 1003.70 98.39 1003.70 C108.99 1003.70 108.99 1003.70 119.59 1003.70 C130.18 1003.70 137.33 1003.70 140.78 1003.70 C158.53 1003.70 151.38 896.60 161.97 896.60 C172.57 896.60 165.42 1003.70 183.17 1003.70 C186.61 1003.70 193.76 1003.70 204.36 1003.70 C214.96 1003.70 214.96 1003.70 225.55 1003.70 C236.15 1003.70 243.71 1003.70 246.75 1003.70 C264.90 1003.70 257.34 878.75 267.94 878.75 C278.54 878.75 270.98 1003.70 289.13 1003.70 C292.17 1003.70 299.73 1003.70 310.33 1003.70 C320.92 1003.70 320.92 1003.70 331.52 1003.70 C342.12 1003.70 342.12 1003.70 352.71 1003.70 C363.31 1003.70 366.74 1003.70 373.91 1003.70 C387.94 1003.70 384.50 968.00 395.10 968.00 C405.70 968.00 402.26 1003.70 416.29 1003.70 C423.46 1003.70 426.89 1003.70 437.49 1003.70 C448.08 1003.70 448.08 1003.70 458.68 1003.70 C469.28 1003.70 469.28 1003.70 479.87 1003.70 C490.47 1003.70 490.47 1003.70 501.07 1003.70 C511.66 1003.70 511.66 1003.70 522.26 1003.70 C532.86 1003.70 532.86 1003.70 543.45 1003.70 C554.05 1003.70 555.46 1003.70 564.65 1003.70 C576.66 1003.70 575.24 985.85 585.84 985.85 C596.44 985.85 595.02 1003.70 607.03 1003.70 C616.22 1003.70 617.63 1003.70 628.23 1003.70 C638.82 1003.70 638.82 1003.70 649.42 1003.70 C660.02 1003.70 660.02 1003.70 670.61 1003.70 C681.21 1003.70 681.21 1003.70 691.81 1003.70 C702.40 1003.70 713.00 1003.70 713.00 1003.70" fill="none" stroke="#2574f6" stroke-width="2.4" stroke-linejoin="round" stroke-linecap="round"/><path d="M77.20 1003.70 C77.20 1003.70 87.80 985.85 98.39 985.85 C108.99 985.85 107.58 1003.70 119.59 1003.70 C128.77 1003.70 137.74 1003.70 140.78 1003.70 C158.94 1003.70 151.38 878.75 161.97 878.75 C172.57 878.75 165.01 1003.70 183.17 1003.70 C186.20 1003.70 200.38 1003.70 204.36 1003.70 C221.58 1003.70 214.96 914.45 225.55 914.45 C236.15 914.45 229.53 1003.70 246.75 1003.70 C250.72 1003.70 265.49 1003.70 267.94 1003.70 C286.68 1003.70 278.54 843.05 289.13 843.05 C299.73 843.05 291.58 1003.70 310.33 1003.70 C312.78 1003.70 320.92 1003.70 331.52 1003.70 C342.12 1003.70 342.12 1003.70 352.71 1003.70 C363.31 1003.70 363.31 1003.70 373.91 1003.70 C384.50 1003.70 387.94 1003.70 395.10 1003.70 C409.13 1003.70 405.70 968.00 416.29 968.00 C426.89 968.00 423.46 1003.70 437.49 1003.70 C444.65 1003.70 451.52 1003.70 458.68 1003.70 C472.71 1003.70 469.28 968.00 479.87 968.00 C490.47 968.00 487.04 1003.70 501.07 1003.70 C508.23 1003.70 517.57 1003.70 522.26 1003.70 C538.76 1003.70 532.86 932.30 543.45 932.30 C554.05 932.30 548.15 1003.70 564.65 1003.70 C569.34 1003.70 578.68 1003.70 585.84 1003.70 C599.87 1003.70 596.44 968.00 607.03 968.00 C617.63 968.00 614.20 1003.70 628.23 1003.70 C635.39 1003.70 638.82 1003.70 649.42 1003.70 C660.02 1003.70 660.02 1003.70 670.61 1003.70 C681.21 1003.70 681.21 1003.70 691.81 1003.70 C702.40 1003.70 713.00 1003.70 713.00 1003.70" fill="none" stroke="#33b2ae" stroke-width="2.4" stroke-linejoin="round" stroke-linecap="round"/><path d="M77.20 985.85 C77.20 985.85 86.38 1003.70 98.39 1003.70 C107.58 1003.70 108.99 1003.70 119.59 1003.70 C130.18 1003.70 137.74 1003.70 140.78 1003.70 C158.94 1003.70 151.38 878.75 161.97 878.75 C172.57 878.75 170.87 1003.70 183.17 1003.70 C192.07 1003.70 193.76 914.45 204.36 914.45 C214.96 914.45 208.34 1003.70 225.55 1003.70 C229.53 1003.70 244.51 1003.70 246.75 1003.70 C265.70 1003.70 257.34 825.20 267.94 825.20 C278.54 825.20 270.18 1003.70 289.13 1003.70 C291.37 1003.70 301.14 1003.70 310.33 1003.70 C322.34 1003.70 320.92 985.85 331.52 985.85 C342.12 985.85 340.70 1003.70 352.71 1003.70 C361.90 1003.70 364.72 1003.70 373.91 1003.70 C385.92 1003.70 384.50 985.85 395.10 985.85 C405.70 985.85 404.28 1003.70 416.29 1003.70 C425.48 1003.70 428.30 1003.70 437.49 1003.70 C449.50 1003.70 448.08 985.85 458.68 985.85 C469.28 985.85 467.86 1003.70 479.87 1003.70 C489.06 1003.70 491.88 1003.70 501.07 1003.70 C513.08 1003.70 511.66 985.85 522.26 985.85 C532.86 985.85 531.44 1003.70 543.45 1003.70 C552.64 1003.70 557.48 1003.70 564.65 1003.70 C578.68 1003.70 575.24 968.00 585.84 968.00 C596.44 968.00 593.00 1003.70 607.03 1003.70 C614.20 1003.70 619.04 1003.70 628.23 1003.70 C640.24 1003.70 638.82 985.85 649.42 985.85 C660.02 985.85 658.60 1003.70 670.61 1003.70 C679.80 1003.70 682.62 1003.70 691.81 1003.70 C703.82 1003.70 713.00 985.85 713.00 985.85" fill="none" stroke="#f28424" stroke-width="2.4" stroke-linejoin="round" stroke-linecap="round"/><path d="M77.20 1003.70 C77.20 1003.70 87.80 860.90 98.39 860.90 C108.99 860.90 101.11 1003.70 119.59 1003.70 C122.30 1003.70 136.80 1003.70 140.78 1003.70 C158.00 1003.70 151.38 914.45 161.97 914.45 C172.57 914.45 165.95 1003.70 183.17 1003.70 C187.14 1003.70 201.91 1003.70 204.36 1003.70 C223.10 1003.70 214.96 843.05 225.55 843.05 C236.15 843.05 228.00 1003.70 246.75 1003.70 C249.20 1003.70 258.76 1003.70 267.94 1003.70 C279.95 1003.70 278.54 985.85 289.13 985.85 C299.73 985.85 298.32 1003.70 310.33 1003.70 C319.51 1003.70 322.34 1003.70 331.52 1003.70 C343.53 1003.70 342.12 985.85 352.71 985.85 C363.31 985.85 361.90 1003.70 373.91 1003.70 C383.09 1003.70 385.92 1003.70 395.10 1003.70 C407.11 1003.70 405.70 985.85 416.29 985.85 C426.89 985.85 425.48 1003.70 437.49 1003.70 C446.67 1003.70 449.50 1003.70 458.68 1003.70 C470.69 1003.70 469.28 985.85 479.87 985.85 C490.47 985.85 489.06 1003.70 501.07 1003.70 C510.25 1003.70 513.08 1003.70 522.26 1003.70 C534.27 1003.70 531.44 985.85 543.45 985.85 C552.64 985.85 555.46 985.85 564.65 985.85 C576.66 985.85 575.24 1003.70 585.84 1003.70 C596.44 1003.70 596.44 985.85 607.03 985.85 C617.63 985.85 616.22 1003.70 628.23 1003.70 C637.41 1003.70 640.24 1003.70 649.42 1003.70 C661.43 1003.70 660.02 985.85 670.61 985.85 C681.21 985.85 679.80 1003.70 691.81 1003.70 C700.99 1003.70 713.00 1003.70 713.00 1003.70" fill="none" stroke="#6a30cc" stroke-width="2.4" stroke-linejoin="round" stroke-linecap="round"/><path d="M77.20 1003.70 C77.20 1003.70 89.21 1003.70 98.39 1003.70 C110.40 1003.70 108.99 985.85 119.59 985.85 C130.18 985.85 135.03 1003.70 140.78 1003.70 C156.23 1003.70 150.02 932.30 161.97 932.30 C171.22 932.30 168.86 961.75 183.17 985.85 C190.05 997.45 192.35 1003.70 204.36 1003.70 C213.54 1003.70 221.58 1003.70 225.55 1003.70 C242.77 1003.70 236.15 914.45 246.75 914.45 C257.34 914.45 250.72 1003.70 267.94 1003.70 C271.92 1003.70 279.95 1003.70 289.13 1003.70 C301.14 1003.70 299.73 985.85 310.33 985.85 C320.92 985.85 319.51 1003.70 331.52 1003.70 C340.70 1003.70 343.53 1003.70 352.71 1003.70 C364.72 1003.70 363.31 985.85 373.91 985.85 C384.50 985.85 383.09 1003.70 395.10 1003.70 C404.28 1003.70 407.11 1003.70 416.29 1003.70 C428.30 1003.70 426.89 985.85 437.49 985.85 C448.08 985.85 446.67 1003.70 458.68 1003.70 C467.86 1003.70 470.69 1003.70 479.87 1003.70 C491.88 1003.70 490.47 985.85 501.07 985.85 C511.66 985.85 510.25 1003.70 522.26 1003.70 C531.44 1003.70 534.27 1003.70 543.45 1003.70 C555.46 1003.70 554.05 985.85 564.65 985.85 C575.24 985.85 573.83 1003.70 585.84 1003.70 C595.02 1003.70 603.06 1003.70 607.03 1003.70 C624.25 1003.70 617.63 914.45 628.23 914.45 C638.82 914.45 632.20 1003.70 649.42 1003.70 C653.40 1003.70 661.43 1003.70 670.61 1003.70 C682.62 1003.70 681.21 985.85 691.81 985.85 C702.40 985.85 713.00 1003.70 713.00 1003.70" fill="none" stroke="#7d45d9" stroke-width="2.4" stroke-linejoin="round" stroke-linecap="round"/><rect x="46.9" y="1049.1" width="31.5" height="3.8" fill="#2574f6"/><text x="85.9" y="1055.0" font-size="15" fill="#333">192.168.</text><rect x="143.9" y="1041.0" width="11.0" height="8.5" fill="#e8e8e8"/><rect x="154.9" y="1041.0" width="11.0" height="8.5" fill="#dcdcdc"/><rect x="165.9" y="1041.0" width="11.0" height="8.5" fill="#e4e4e4"/><rect x="176.9" y="1041.0" width="11.0" height="8.5" fill="#d4d4d4"/><rect x="187.9" y="1041.0" width="4.0" height="8.5" fill="#d8d8d8"/><rect x="143.9" y="1049.5" width="11.0" height="8.5" fill="#e4e4e4"/><rect x="154.9" y="1049.5" width="11.0" height="8.5" fill="#e4e4e4"/><rect x="165.9" y="1049.5" width="11.0" height="8.5" fill="#e8e8e8"/><rect x="176.9" y="1049.5" width="11.0" height="8.5" fill="#f0f0f0"/><rect x="187.9" y="1049.5" width="4.0" height="8.5" fill="#e4e4e4"/><rect x="204.6" y="1049.1" width="31.5" height="3.8" fill="#33b2ae"/><text x="243.6" y="1055.0" font-size="15" fill="#333">192.168.</text><rect x="301.6" y="1041.0" width="11.0" height="8.5" fill="#dcdcdc"/><rect x="312.6" y="1041.0" width="11.0" height="8.5" fill="#e0e0e0"/><rect x="323.6" y="1041.0" width="11.0" height="8.5" fill="#e8e8e8"/><rect x="334.6" y="1041.0" width="11.0" height="8.5" fill="#e0e0e0"/><rect x="345.6" y="1041.0" width="6.0" height="8.5" fill="#e0e0e0"/><rect x="301.6" y="1049.5" width="11.0" height="8.5" fill="#d4d4d4"/><rect x="312.6" y="1049.5" width="11.0" height="8.5" fill="#d8d8d8"/><rect x="323.6" y="1049.5" width="11.0" height="8.5" fill="#e8e8e8"/><rect x="334.6" y="1049.5" width="11.0" height="8.5" fill="#d4d4d4"/><rect x="345.6" y="1049.5" width="6.0" height="8.5" fill="#d4d4d4"/><rect x="362.7" y="1049.1" width="31.5" height="3.8" fill="#f28424"/><text x="401.7" y="1055.0" font-size="15" fill="#333">192.168.</text><rect x="459.7" y="1041.0" width="11.0" height="8.5" fill="#e4e4e4"/><rect x="470.7" y="1041.0" width="11.0" height="8.5" fill="#e8e8e8"/><rect x="481.7" y="1041.0" width="11.0" height="8.5" fill="#e0e0e0"/><rect x="492.7" y="1041.0" width="5.0" height="8.5" fill="#e4e4e4"/><rect x="459.7" y="1049.5" width="11.0" height="8.5" fill="#e4e4e4"/><rect x="470.7" y="1049.5" width="11.0" height="8.5" fill="#d8d8d8"/><rect x="481.7" y="1049.5" width="11.0" height="8.5" fill="#f0f0f0"/><rect x="492.7" y="1049.5" width="5.0" height="8.5" fill="#d4d4d4"/><rect x="511.7" y="1049.1" width="31.5" height="3.8" fill="#6a30cc"/><text x="550.7" y="1055.0" font-size="15" fill="#333">192.168.</text><rect x="608.7" y="1041.0" width="11.0" height="8.5" fill="#f0f0f0"/><rect x="619.7" y="1041.0" width="11.0" height="8.5" fill="#e8e8e8"/><rect x="630.7" y="1041.0" width="11.0" height="8.5" fill="#d4d4d4"/><rect x="641.7" y="1041.0" width="1.0" height="8.5" fill="#d8d8d8"/><rect x="608.7" y="1049.5" width="11.0" height="8.5" fill="#dcdcdc"/><rect x="619.7" y="1049.5" width="11.0" height="8.5" fill="#dcdcdc"/><rect x="630.7" y="1049.5" width="11.0" height="8.5" fill="#f0f0f0"/><rect x="641.7" y="1049.5" width="1.0" height="8.5" fill="#dcdcdc"/><path d="M655.0 1050.5 L667.0 1041.5 L667.0 1059.5 Z" fill="#aaaaaa"/><text x="679.5" y="1054.5" font-size="15" fill="#333">1/2</text><path d="M715.5 1041.5 L727.0 1050.5 L715.5 1059.5 Z" fill="#2f4554"/></svg>
<div class="t" style="left:784px;top:695px;font-size:18px;color:#262626">网络吞吐量(传输)<span style="font-size:15px;color:#5f687a;margin-left:8px">(单位: Bps)</span></div>
<div class="btn" style="left:784px;top:734px;width:125px;height:30px;border-radius:2px"></div>
<div class="t" style="left:794px;top:740px;font-size:17px;color:#262626">ens192</div>
<svg class="a" style="left:881px;top:744px" width="14" height="10"><polyline points="1.0,1.0 7.0,9.0 13.0,1.0" fill="none" stroke="#bfbfbf" stroke-width="1.2"/></svg>
<svg class="a" style="left:0;top:0" width="2265" height="1095" font-family="Liberation Sans, sans-serif"><line x1="846" y1="789.4" x2="1455" y2="789.4" stroke="#e3e8f3" stroke-width="1"/><text x="836" y="793.0" font-size="15" fill="#6e7079" text-anchor="end">600k</text><line x1="846" y1="842.0" x2="1455" y2="842.0" stroke="#e3e8f3" stroke-width="1"/><text x="836" y="845.6" font-size="15" fill="#6e7079" text-anchor="end">500k</text><line x1="846" y1="894.5" x2="1455" y2="894.5" stroke="#e3e8f3" stroke-width="1"/><text x="836" y="898.1" font-size="15" fill="#6e7079" text-anchor="end">400k</text><line x1="846" y1="947.0" x2="1455" y2="947.0" stroke="#e3e8f3" stroke-width="1"/><text x="836" y="950.6" font-size="15" fill="#6e7079" text-anchor="end">300k</text><text x="836" y="1007.9" font-size="15" fill="#6e7079" text-anchor="end">200k</text><line x1="846" y1="1004.3" x2="1455" y2="1004.3" stroke="#e0e0e0" stroke-width="1.3"/><line x1="846.0" y1="1004.3" x2="846.0" y2="1010.3" stroke="#e0e0e0" stroke-width="1"/><text x="846.0" y="1025.1" font-size="15" fill="#4a4a4a" text-anchor="middle">09:50</text><line x1="967.8" y1="1004.3" x2="967.8" y2="1010.3" stroke="#e0e0e0" stroke-width="1"/><text x="967.8" y="1025.1" font-size="15" fill="#4a4a4a" text-anchor="middle">09:51</text><line x1="1089.6" y1="1004.3" x2="1089.6" y2="1010.3" stroke="#e0e0e0" stroke-width="1"/><text x="1089.6" y="1025.1" font-size="15" fill="#4a4a4a" text-anchor="middle">09:52</text><line x1="1211.4" y1="1004.3" x2="1211.4" y2="1010.3" stroke="#e0e0e0" stroke-width="1"/><text x="1211.4" y="1025.1" font-size="15" fill="#4a4a4a" text-anchor="middle">09:53</text><line x1="1333.2" y1="1004.3" x2="1333.2" y2="1010.3" stroke="#e0e0e0" stroke-width="1"/><text x="1333.2" y="1025.1" font-size="15" fill="#4a4a4a" text-anchor="middle">09:54</text><path d="M846.00 1001.55 C846.00 1001.55 856.00 994.20 866.30 994.20 C876.30 994.20 876.29 999.45 886.60 999.45 C896.59 999.45 896.88 999.45 906.90 998.82 C917.18 998.17 917.03 994.20 927.20 994.20 C937.33 994.20 937.37 996.20 947.50 998.40 C957.67 1000.61 958.00 1003.02 967.80 1003.02 C978.30 1003.02 977.66 993.78 988.10 993.78 C997.96 993.78 998.12 997.21 1008.40 999.45 C1018.42 1001.62 1018.80 1002.60 1028.70 1002.60 C1039.10 1002.60 1038.64 995.25 1049.00 995.25 C1058.94 995.25 1059.12 997.50 1069.30 999.45 C1079.42 1001.38 1080.25 1003.02 1089.60 1003.02 C1100.55 1003.02 1099.37 990.00 1109.90 990.00 C1119.67 990.00 1119.61 996.16 1130.20 999.45 C1139.91 1002.46 1140.60 1002.60 1150.50 1002.60 C1160.90 1002.60 1160.44 995.25 1170.80 995.25 C1180.74 995.25 1180.90 997.60 1191.10 999.45 C1201.20 1001.27 1201.55 1002.60 1211.40 1002.60 C1221.85 1002.60 1221.27 994.62 1231.70 994.62 C1241.57 994.62 1241.89 996.30 1252.00 998.40 C1262.19 1000.50 1262.37 1003.02 1272.30 1003.02 C1282.67 1003.02 1282.10 995.25 1292.60 995.25 C1302.40 995.25 1303.10 995.25 1312.90 995.25 C1323.40 995.25 1323.10 1003.02 1333.20 1003.02 C1343.40 1003.02 1343.09 994.62 1353.50 994.62 C1363.39 994.62 1363.59 997.33 1373.80 999.45 C1383.89 1001.53 1384.31 1003.02 1394.10 1003.02 C1404.61 1003.02 1403.98 994.20 1414.40 994.20 C1424.28 994.20 1424.43 997.43 1434.70 999.45 C1444.73 1001.42 1455.00 1002.18 1455.00 1002.18" fill="none" stroke="#2574f6" stroke-width="2.4" stroke-linejoin="round" stroke-linecap="round"/><path d="M846.00 962.70 C846.00 962.70 856.74 956.40 866.30 956.40 C877.04 956.40 875.63 969.00 886.60 969.00 C895.93 969.00 897.93 969.00 906.90 967.95 C918.23 966.62 917.49 952.20 927.20 952.20 C937.79 952.20 935.91 971.52 947.50 971.52 C956.21 971.52 958.22 970.01 967.80 965.85 C978.52 961.19 978.77 953.88 988.10 953.88 C999.07 953.88 997.19 972.78 1008.40 972.78 C1017.49 972.78 1018.21 967.02 1028.70 963.12 C1038.51 959.46 1039.64 957.66 1049.00 957.66 C1059.94 957.66 1058.44 971.52 1069.30 971.52 C1078.74 971.52 1079.59 968.53 1089.60 964.80 C1099.89 960.97 1099.95 956.40 1109.90 956.40 C1120.25 956.40 1119.56 966.90 1130.20 966.90 C1139.86 966.90 1140.35 964.80 1150.50 962.70 C1160.65 960.60 1161.42 958.50 1170.80 958.50 C1181.72 958.50 1180.21 971.52 1191.10 971.52 C1200.51 971.52 1201.43 969.83 1211.40 966.90 C1221.73 963.85 1222.14 959.55 1231.70 959.55 C1242.44 959.55 1241.16 972.78 1252.00 972.78 C1261.46 972.78 1262.21 970.03 1272.30 966.90 C1282.51 963.73 1282.94 960.18 1292.60 960.18 C1303.24 960.18 1302.70 972.15 1312.90 972.15 C1323.00 972.15 1322.34 960.60 1333.20 960.60 C1342.64 960.60 1343.53 960.60 1353.50 961.02 C1363.83 961.45 1363.52 966.48 1373.80 966.48 C1383.82 966.48 1384.31 966.43 1394.10 963.75 C1404.61 960.87 1404.68 955.35 1414.40 955.35 C1424.98 955.35 1423.91 967.95 1434.70 967.95 C1444.21 967.95 1455.00 962.28 1455.00 962.28" fill="none" stroke="#33b2ae" stroke-width="2.4" stroke-linejoin="round" stroke-linecap="round"/><path d="M846.00 800.16 C846.00 800.16 856.19 800.16 866.30 800.16 C876.49 800.16 876.45 802.68 886.60 802.68 C896.75 802.68 896.71 800.16 906.90 800.16 C917.01 800.16 917.09 800.16 927.20 800.16 C937.39 800.16 937.35 802.68 947.50 802.68 C957.65 802.68 957.61 800.16 967.80 800.16 C977.91 800.16 977.99 800.16 988.10 800.16 C998.29 800.16 998.25 802.68 1008.40 802.68 C1018.55 802.68 1018.51 800.16 1028.70 800.16 C1038.81 800.16 1038.89 800.16 1049.00 800.16 C1059.19 800.16 1059.15 802.68 1069.30 802.68 C1079.45 802.68 1079.41 800.16 1089.60 800.16 C1099.71 800.16 1099.79 800.16 1109.90 800.16 C1120.09 800.16 1120.05 802.68 1130.20 802.68 C1140.35 802.68 1140.31 800.16 1150.50 800.16 C1160.61 800.16 1160.69 800.16 1170.80 800.16 C1180.99 800.16 1180.95 802.68 1191.10 802.68 C1201.25 802.68 1201.21 800.16 1211.40 800.16 C1221.51 800.16 1221.59 800.16 1231.70 800.16 C1241.89 800.16 1241.85 802.68 1252.00 802.68 C1262.15 802.68 1262.11 800.16 1272.30 800.16 C1282.41 800.16 1282.49 800.16 1292.60 800.16 C1302.79 800.16 1302.75 802.68 1312.90 802.68 C1323.05 802.68 1323.01 800.16 1333.20 800.16 C1343.31 800.16 1343.39 800.16 1353.50 800.16 C1363.69 800.16 1363.65 802.68 1373.80 802.68 C1383.95 802.68 1383.91 800.16 1394.10 800.16 C1404.21 800.16 1404.29 800.16 1414.40 800.16 C1424.59 800.16 1424.55 802.68 1434.70 802.68 C1444.85 802.68 1455.00 800.16 1455.00 800.16" fill="none" stroke="#f28424" stroke-width="2.4" stroke-linejoin="round" stroke-linecap="round"/><path d="M846.00 1000.92 C846.00 1000.92 856.12 998.82 866.30 998.82 C876.42 998.82 876.48 998.82 886.60 998.82 C896.78 998.82 896.75 1000.92 906.90 1000.92 C917.05 1000.92 917.02 998.82 927.20 998.82 C937.32 998.82 937.38 998.82 947.50 998.82 C957.68 998.82 957.65 1000.92 967.80 1000.92 C977.95 1000.92 977.92 998.82 988.10 998.82 C998.22 998.82 998.28 998.82 1008.40 998.82 C1018.58 998.82 1018.55 1000.92 1028.70 1000.92 C1038.85 1000.92 1038.82 998.82 1049.00 998.82 C1059.12 998.82 1059.18 998.82 1069.30 998.82 C1079.48 998.82 1079.45 1000.92 1089.60 1000.92 C1099.75 1000.92 1099.72 998.82 1109.90 998.82 C1120.02 998.82 1120.08 998.82 1130.20 998.82 C1140.38 998.82 1140.35 1000.92 1150.50 1000.92 C1160.65 1000.92 1160.62 998.82 1170.80 998.82 C1180.92 998.82 1180.98 998.82 1191.10 998.82 C1201.28 998.82 1201.25 1000.92 1211.40 1000.92 C1221.55 1000.92 1221.52 998.82 1231.70 998.82 C1241.82 998.82 1241.88 998.82 1252.00 998.82 C1262.18 998.82 1262.15 1000.92 1272.30 1000.92 C1282.45 1000.92 1282.42 998.82 1292.60 998.82 C1302.72 998.82 1302.78 998.82 1312.90 998.82 C1323.08 998.82 1323.05 1000.92 1333.20 1000.92 C1343.35 1000.92 1343.32 998.82 1353.50 998.82 C1363.62 998.82 1363.68 998.82 1373.80 998.82 C1383.98 998.82 1383.95 1000.92 1394.10 1000.92 C1404.25 1000.92 1404.22 998.82 1414.40 998.82 C1424.52 998.82 1424.58 998.82 1434.70 998.82 C1444.88 998.82 1455.00 1000.92 1455.00 1000.92" fill="none" stroke="#6a30cc" stroke-width="2.4" stroke-linejoin="round" stroke-linecap="round"/><path d="M846.00 930.15 C846.00 930.15 854.40 907.68 866.30 907.68 C874.70 907.68 877.38 909.29 886.60 914.40 C897.68 920.53 897.58 930.15 906.90 930.15 C917.88 930.15 915.30 907.68 927.20 907.68 C935.60 907.68 938.28 909.29 947.50 914.40 C958.58 920.53 958.48 930.15 967.80 930.15 C978.78 930.15 976.20 907.68 988.10 907.68 C996.50 907.68 999.18 909.29 1008.40 914.40 C1019.48 920.53 1019.38 930.15 1028.70 930.15 C1039.68 930.15 1037.10 907.68 1049.00 907.68 C1057.40 907.68 1060.08 909.29 1069.30 914.40 C1080.38 920.53 1080.28 930.15 1089.60 930.15 C1100.58 930.15 1098.00 907.68 1109.90 907.68 C1118.30 907.68 1120.98 909.29 1130.20 914.40 C1141.28 920.53 1141.18 930.15 1150.50 930.15 C1161.48 930.15 1158.90 907.68 1170.80 907.68 C1179.20 907.68 1181.88 909.29 1191.10 914.40 C1202.18 920.53 1202.08 930.15 1211.40 930.15 C1222.38 930.15 1219.80 907.68 1231.70 907.68 C1240.10 907.68 1242.78 909.29 1252.00 914.40 C1263.08 920.53 1262.98 930.15 1272.30 930.15 C1283.28 930.15 1280.70 907.68 1292.60 907.68 C1301.00 907.68 1303.68 909.29 1312.90 914.40 C1323.98 920.53 1323.88 930.15 1333.20 930.15 C1344.18 930.15 1341.60 907.68 1353.50 907.68 C1361.90 907.68 1364.58 909.29 1373.80 914.40 C1384.88 920.53 1384.78 930.15 1394.10 930.15 C1405.08 930.15 1402.50 907.68 1414.40 907.68 C1422.80 907.68 1425.48 909.29 1434.70 914.40 C1445.78 920.53 1455.00 930.15 1455.00 930.15" fill="none" stroke="#7d45d9" stroke-width="2.4" stroke-linejoin="round" stroke-linecap="round"/><rect x="789.8" y="1049.1" width="31.5" height="3.8" fill="#2574f6"/><text x="828.8" y="1055.0" font-size="15" fill="#333">192.168.</text><rect x="886.8" y="1041.0" width="11.0" height="8.5" fill="#e0e0e0"/><rect x="897.8" y="1041.0" width="11.0" height="8.5" fill="#e4e4e4"/><rect x="908.8" y="1041.0" width="11.0" height="8.5" fill="#e0e0e0"/><rect x="919.8" y="1041.0" width="11.0" height="8.5" fill="#d8d8d8"/><rect x="930.8" y="1041.0" width="4.0" height="8.5" fill="#dcdcdc"/><rect x="886.8" y="1049.5" width="11.0" height="8.5" fill="#ececec"/><rect x="897.8" y="1049.5" width="11.0" height="8.5" fill="#ececec"/><rect x="908.8" y="1049.5" width="11.0" height="8.5" fill="#d4d4d4"/><rect x="919.8" y="1049.5" width="11.0" height="8.5" fill="#f0f0f0"/><rect x="930.8" y="1049.5" width="4.0" height="8.5" fill="#ececec"/><rect x="947.5" y="1049.1" width="31.5" height="3.8" fill="#33b2ae"/><text x="986.5" y="1055.0" font-size="15" fill="#333">192.168.</text><rect x="1044.5" y="1041.0" width="11.0" height="8.5" fill="#f0f0f0"/><rect x="1055.5" y="1041.0" width="11.0" height="8.5" fill="#e4e4e4"/><rect x="1066.5" y="1041.0" width="11.0" height="8.5" fill="#e8e8e8"/><rect x="1077.5" y="1041.0" width="11.0" height="8.5" fill="#e8e8e8"/><rect x="1088.5" y="1041.0" width="3.0" height="8.5" fill="#dcdcdc"/><rect x="1044.5" y="1049.5" width="11.0" height="8.5" fill="#f0f0f0"/><rect x="1055.5" y="1049.5" width="11.0" height="8.5" fill="#d8d8d8"/><rect x="1066.5" y="1049.5" width="11.0" height="8.5" fill="#ececec"/><rect x="1077.5" y="1049.5" width="11.0" height="8.5" fill="#d4d4d4"/><rect x="1088.5" y="1049.5" width="3.0" height="8.5" fill="#ececec"/><rect x="1105.6" y="1049.1" width="31.5" height="3.8" fill="#f28424"/><text x="1144.6" y="1055.0" font-size="15" fill="#333">192.168.4.146</text><rect x="1253.8" y="1049.1" width="31.5" height="3.8" fill="#6a30cc"/><clipPath id="clip1253"><rect x="1253.8" y="1036.0" width="131.2" height="30"/></clipPath><text x="1292.8" y="1055.0" font-size="15" fill="#333" clip-path="url(#clip1253)">192.168.4.147</text><path d="M1397.0 1050.5 L1409.0 1041.5 L1409.0 1059.5 Z" fill="#aaaaaa"/><text x="1421.5" y="1054.5" font-size="15" fill="#333">1/2</text><path d="M1457.5 1041.5 L1469.0 1050.5 L1457.5 1059.5 Z" fill="#2f4554"/></svg>
<div class="t" style="left:1527px;top:695px;font-size:18px;color:#262626">YashanDB当前会话数量<span style="font-size:15px;color:#5f687a;margin-left:8px">(单位: 个)</span></div>
<svg class="a" style="left:0;top:0" width="2265" height="1095" font-family="Liberation Sans, sans-serif"><line x1="1559.5" y1="748.5" x2="2198" y2="748.5" stroke="#e3e8f3" stroke-width="1"/><text x="1549.5" y="752.1" font-size="15" fill="#6e7079" text-anchor="end">45</text><line x1="1559.5" y1="803.3" x2="2198" y2="803.3" stroke="#e3e8f3" stroke-width="1"/><text x="1549.5" y="806.9" font-size="15" fill="#6e7079" text-anchor="end">42</text><line x1="1559.5" y1="858.1" x2="2198" y2="858.1" stroke="#e3e8f3" stroke-width="1"/><text x="1549.5" y="861.7" font-size="15" fill="#6e7079" text-anchor="end">39</text><line x1="1559.5" y1="912.9" x2="2198" y2="912.9" stroke="#e3e8f3" stroke-width="1"/><text x="1549.5" y="916.5" font-size="15" fill="#6e7079" text-anchor="end">36</text><line x1="1559.5" y1="967.7" x2="2198" y2="967.7" stroke="#e3e8f3" stroke-width="1"/><text x="1549.5" y="971.3" font-size="15" fill="#6e7079" text-anchor="end">33</text><text x="1549.5" y="1007.9" font-size="15" fill="#6e7079" text-anchor="end">31</text><line x1="1559.5" y1="1004.3" x2="2198" y2="1004.3" stroke="#e0e0e0" stroke-width="1.3"/><line x1="1559.5" y1="1004.3" x2="1559.5" y2="1010.3" stroke="#e0e0e0" stroke-width="1"/><text x="1559.5" y="1025.1" font-size="15" fill="#4a4a4a" text-anchor="middle">09:50</text><line x1="1687.2" y1="1004.3" x2="1687.2" y2="1010.3" stroke="#e0e0e0" stroke-width="1"/><text x="1687.2" y="1025.1" font-size="15" fill="#4a4a4a" text-anchor="middle">09:51</text><line x1="1814.9" y1="1004.3" x2="1814.9" y2="1010.3" stroke="#e0e0e0" stroke-width="1"/><text x="1814.9" y="1025.1" font-size="15" fill="#4a4a4a" text-anchor="middle">09:52</text><line x1="1942.6" y1="1004.3" x2="1942.6" y2="1010.3" stroke="#e0e0e0" stroke-width="1"/><text x="1942.6" y="1025.1" font-size="15" fill="#4a4a4a" text-anchor="middle">09:53</text><line x1="2070.3" y1="1004.3" x2="2070.3" y2="1010.3" stroke="#e0e0e0" stroke-width="1"/><text x="2070.3" y="1025.1" font-size="15" fill="#4a4a4a" text-anchor="middle">09:54</text><path d="M1559.50 1004.00 C1559.50 1004.00 1570.14 1004.00 1580.78 1004.00 C1591.42 1004.00 1591.42 1004.00 1602.07 1004.00 C1612.71 1004.00 1612.71 1004.00 1623.35 1004.00 C1633.99 1004.00 1633.99 1004.00 1644.63 1004.00 C1655.28 1004.00 1655.28 1004.00 1665.92 1004.00 C1676.56 1004.00 1676.56 1004.00 1687.20 1004.00 C1697.84 1004.00 1697.84 1004.00 1708.48 1004.00 C1719.12 1004.00 1719.12 1004.00 1729.77 1004.00 C1740.41 1004.00 1740.41 1004.00 1751.05 1004.00 C1761.69 1004.00 1761.69 1004.00 1772.33 1004.00 C1782.97 1004.00 1782.97 1004.00 1793.62 1004.00 C1804.26 1004.00 1804.26 1004.00 1814.90 1004.00 C1825.54 1004.00 1825.54 1004.00 1836.18 1004.00 C1846.83 1004.00 1846.83 1004.00 1857.47 1004.00 C1868.11 1004.00 1868.11 1004.00 1878.75 1004.00 C1889.39 1004.00 1889.39 1004.00 1900.03 1004.00 C1910.67 1004.00 1910.67 1004.00 1921.32 1004.00 C1931.96 1004.00 1931.96 1004.00 1942.60 1004.00 C1953.24 1004.00 1953.24 1004.00 1963.88 1004.00 C1974.53 1004.00 1974.53 1004.00 1985.17 1004.00 C1995.81 1004.00 1995.81 1004.00 2006.45 1004.00 C2017.09 1004.00 2017.09 1004.00 2027.73 1004.00 C2038.38 1004.00 2038.38 1004.00 2049.02 1004.00 C2059.66 1004.00 2059.66 1004.00 2070.30 1004.00 C2080.94 1004.00 2080.94 1004.00 2091.58 1004.00 C2102.23 1004.00 2102.23 1004.00 2112.87 1004.00 C2123.51 1004.00 2123.51 1004.00 2134.15 1004.00 C2144.79 1004.00 2144.79 1004.00 2155.43 1004.00 C2166.07 1004.00 2166.07 1004.00 2176.72 1004.00 C2187.36 1004.00 2198.00 1004.00 2198.00 1004.00" fill="none" stroke="#2574f6" stroke-width="2.4" stroke-linejoin="round" stroke-linecap="round"/><path d="M1559.50 749.00 C1559.50 749.00 1570.14 749.00 1580.78 749.00 C1591.42 749.00 1591.42 749.00 1602.07 749.00 C1612.71 749.00 1612.71 749.00 1623.35 749.00 C1633.99 749.00 1633.99 749.00 1644.63 749.00 C1655.28 749.00 1655.28 749.00 1665.92 749.00 C1676.56 749.00 1676.56 749.00 1687.20 749.00 C1697.84 749.00 1697.84 749.00 1708.48 749.00 C1719.12 749.00 1719.12 749.00 1729.77 749.00 C1740.41 749.00 1740.41 749.00 1751.05 749.00 C1761.69 749.00 1761.69 749.00 1772.33 749.00 C1782.97 749.00 1782.97 749.00 1793.62 749.00 C1804.26 749.00 1804.26 749.00 1814.90 749.00 C1825.54 749.00 1825.54 749.00 1836.18 749.00 C1846.83 749.00 1846.83 749.00 1857.47 749.00 C1868.11 749.00 1868.11 749.00 1878.75 749.00 C1889.39 749.00 1889.39 749.00 1900.03 749.00 C1910.67 749.00 1910.67 749.00 1921.32 749.00 C1931.96 749.00 1931.96 749.00 1942.60 749.00 C1953.24 749.00 1953.24 749.00 1963.88 749.00 C1974.53 749.00 1974.53 749.00 1985.17 749.00 C1995.81 749.00 1995.81 749.00 2006.45 749.00 C2017.09 749.00 2017.09 749.00 2027.73 749.00 C2038.38 749.00 2038.38 749.00 2049.02 749.00 C2059.66 749.00 2059.66 749.00 2070.30 749.00 C2080.94 749.00 2080.94 749.00 2091.58 749.00 C2102.23 749.00 2102.23 749.00 2112.87 749.00 C2123.51 749.00 2123.51 749.00 2134.15 749.00 C2144.79 749.00 2144.79 749.00 2155.43 749.00 C2166.07 749.00 2166.07 749.00 2176.72 749.00 C2187.36 749.00 2198.00 749.00 2198.00 749.00" fill="none" stroke="#33b2ae" stroke-width="2.4" stroke-linejoin="round" stroke-linecap="round"/><rect x="1697.0" y="1049.1" width="31.5" height="3.8" fill="#2574f6"/><text x="1736.0" y="1055.0" font-size="15" fill="#333">SalesDB-instance1</text><rect x="1879.3" y="1049.1" width="31.5" height="3.8" fill="#33b2ae"/><text x="1918.3" y="1055.0" font-size="15" fill="#333">SalesDB-instance2</text></svg>
</body></html>
